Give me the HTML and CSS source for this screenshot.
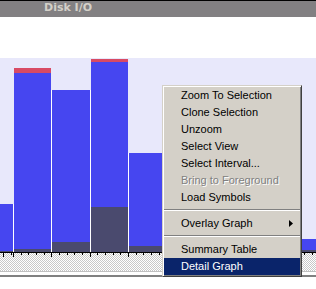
FILE: index.html
```html
<!DOCTYPE html>
<html lang="en">
  <head>
    <meta charset="UTF-8" />
    <title>Disk I/O</title>
    <link rel="stylesheet" href="styles.css">
  </head>
  <body>
    <div class="title">Disk I/O</div>
    <div class="blank"></div>
    <div class="plot">
      <div class="bar" style="width: 13px; height: 48px"><div class="blue"></div><div class="dark" style="height: 1px"></div></div>
      <div class="sep" style="height: 48px"></div>
      <div class="bar" style="width: 37px; height: 184px"><div class="red" style="height: 5px"></div><div class="blue"></div><div class="dark" style="height: 3px"></div></div>
      <div class="sep" style="height: 162px"></div>
      <div class="bar" style="width: 38px; height: 162px"><div class="blue"></div><div class="dark" style="height: 10px"></div></div>
      <div class="sep" style="height: 162px"></div>
      <div class="bar" style="width: 37px; height: 193px"><div class="red" style="height: 3px"></div><div class="blue"></div><div class="dark" style="height: 45px"></div></div>
      <div class="sep" style="height: 99px"></div>
      <div class="bar" style="width: 37px; height: 99px"><div class="blue"></div><div class="dark" style="height: 6px"></div></div>
      <div class="sep" style="height: 99px"></div>
      <div class="bar" style="width: 38px; height: 120px"><div class="blue"></div><div class="dark" style="height: 8px"></div></div>
      <div class="sep" style="height: 80px"></div>
      <div class="bar" style="width: 38px; height: 80px"><div class="blue"></div><div class="dark" style="height: 4px"></div></div>
      <div class="sep" style="height: 50px"></div>
      <div class="bar" style="width: 37px; height: 50px"><div class="blue"></div><div class="dark" style="height: 2px"></div></div>
      <div class="sep" style="height: 13px"></div>
      <div class="bar" style="width: 34px; height: 13px"><div class="blue"></div><div class="dark" style="height: 2px"></div></div>
    </div>
    <div class="axis"></div>
    <div class="track"></div>

    <div class="menu">
      <div class="item">Zoom To Selection</div>
      <div class="item">Clone Selection</div>
      <div class="item">Unzoom</div>
      <div class="item">Select View</div>
      <div class="item">Select Interval...</div>
      <div class="item disabled">Bring to Foreground</div>
      <div class="item">Load Symbols</div>
      <div class="divider"></div>
      <div class="item">Overlay Graph
        <svg class="arrow" width="4" height="7" viewBox="0 0 4 7"><polygon points="0,0 4,3.5 0,7" fill="#000"/></svg>
      </div>
      <div class="divider"></div>
      <div class="item">Summary Table</div>
      <div class="item active">Detail Graph</div>
    </div>
  </body>
</html>
```

FILE: styles.css
```css
body {
  margin: 0;
  width: 316px;
  height: 289px;
  overflow: hidden;
  position: relative;
  background: #fff;
  font-family: "Liberation Sans", Arial, sans-serif;
}
.title {
  border-top: 1px solid #000;
  height: 16px;
  line-height: 16px;
  background: #828082;
  color: #d4d0c8;
  font: bold 11px "DejaVu Sans", sans-serif;
  padding-left: 44px;
}
.blank {
  height: 41px;
}
.plot {
  height: 194px;
  background: #e8e8fb;
  display: flex;
  align-items: flex-end;
}
.bar {
  display: flex;
  flex-direction: column;
  flex-shrink: 0;
}
.red {
  background: #d84a64;
}
.blue {
  flex: 1;
  background: #4646f0;
}
.dark {
  background: #4a4a6e;
}
.sep {
  width: 1px;
  flex-shrink: 0;
  background: #fff;
}
.axis {
  height: 18px;
  border-top: 1px solid #000;
  background:
    linear-gradient(#000, #000) 0 0 / 100% 0 no-repeat,
    repeating-linear-gradient(to right, #000 0 1px, transparent 1px 38.3px) 13px 0 / 100% 4px repeat-x,
    repeating-linear-gradient(to right, #000 0 1px, transparent 1px 7.66px) 13px 0 / 100% 2px repeat-x,
    repeating-conic-gradient(#c8c8c8 0 25%, #fff 0 50%) 0 0 / 2px 2px;
}
.track {
  height: 3px;
  border-top: 1px solid #c0c0c0;
  border-bottom: 2px solid #808080;
}
.menu {
  position: absolute;
  left: 162px;
  top: 85px;
  width: 140px;
  box-sizing: border-box;
  padding: 1px;
  background: #d4d0c8;
  border: 1px solid;
  border-color: #d4d0c8 #404040 #404040 #d4d0c8;
  box-shadow: inset 1px 1px #fff, inset -1px -1px #808080;
  font-size: 11px;
}
.item {
  position: relative;
  height: 17px;
  line-height: 17px;
  padding-left: 17px;
  color: #000;
  white-space: nowrap;
}
.item.disabled {
  color: #808080;
  text-shadow: 1px 1px #fff;
}
.item.active {
  background: #0a246a;
  color: #fff;
}
.arrow {
  position: absolute;
  right: 7px;
  top: 5px;
}
.divider {
  height: 9px;
  box-sizing: border-box;
  padding-top: 3px;
}
.divider::before {
  content: "";
  display: block;
  border-top: 1px solid #808080;
  border-bottom: 1px solid #fff;
}
```
